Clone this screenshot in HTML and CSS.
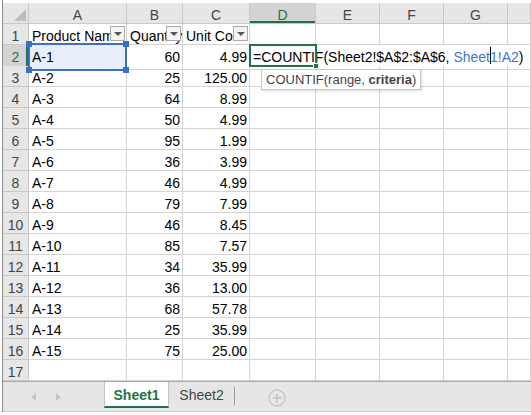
FILE: index.html
```html
<!DOCTYPE html>
<html lang="en">

<head>
    <meta charset="UTF-8">
    <title>Sheet1</title>
    <link rel="stylesheet" href="styles.css">
</head>

<body>
    <div class="sheet">
        <div class="row head">
            <div class="cell corner">
                <svg class="corner-mark" width="12" height="12" viewBox="0 0 12 12"><polygon points="12,0 12,12 0,12" fill="#bdbdbd"/></svg>
            </div>
            <div class="cell">A</div>
            <div class="cell">B</div>
            <div class="cell">C</div>
            <div class="cell on">D</div>
            <div class="cell">E</div>
            <div class="cell">F</div>
            <div class="cell">G</div>
            <div class="cell"></div>
        </div>

        <div class="row">
            <div class="cell rh">1</div>
            <div class="cell">Product Name<span class="filter"></span></div>
            <div class="cell">Quantity<span class="filter"></span></div>
            <div class="cell">Unit Cost<span class="filter"></span></div>
            <div class="cell"></div>
            <div class="cell"></div>
            <div class="cell"></div>
            <div class="cell"></div>
            <div class="cell"></div>
        </div>

        <div class="row">
            <div class="cell rh on">2</div>
            <div class="cell ref">A-1<span class="ref-frame"><i class="h1"></i><i class="h2"></i><i class="h3"></i><i class="h4"></i></span></div>
            <div class="cell num">60</div>
            <div class="cell num">4.99</div>
            <div class="cell edit spill">=COUNTIF(Sheet2!$A$2:$A$6, <span class="blue">Sheet<span class="caret"></span>1!A2</span>)
                <span class="edit-frame"><i class="handle"></i></span>
                <div class="tip">COUNTIF(range, <b>criteria</b>)</div>
            </div>
            <div class="cell spill"></div>
            <div class="cell spill"></div>
            <div class="cell spill"></div>
            <div class="cell"></div>
        </div>

        <div class="row"><div class="cell rh">3</div><div class="cell">A-2</div><div class="cell num">25</div><div class="cell num">125.00</div><div class="cell"></div><div class="cell"></div><div class="cell"></div><div class="cell"></div><div class="cell"></div></div>
        <div class="row"><div class="cell rh">4</div><div class="cell">A-3</div><div class="cell num">64</div><div class="cell num">8.99</div><div class="cell"></div><div class="cell"></div><div class="cell"></div><div class="cell"></div><div class="cell"></div></div>
        <div class="row"><div class="cell rh">5</div><div class="cell">A-4</div><div class="cell num">50</div><div class="cell num">4.99</div><div class="cell"></div><div class="cell"></div><div class="cell"></div><div class="cell"></div><div class="cell"></div></div>
        <div class="row"><div class="cell rh">6</div><div class="cell">A-5</div><div class="cell num">95</div><div class="cell num">1.99</div><div class="cell"></div><div class="cell"></div><div class="cell"></div><div class="cell"></div><div class="cell"></div></div>
        <div class="row"><div class="cell rh">7</div><div class="cell">A-6</div><div class="cell num">36</div><div class="cell num">3.99</div><div class="cell"></div><div class="cell"></div><div class="cell"></div><div class="cell"></div><div class="cell"></div></div>
        <div class="row"><div class="cell rh">8</div><div class="cell">A-7</div><div class="cell num">46</div><div class="cell num">4.99</div><div class="cell"></div><div class="cell"></div><div class="cell"></div><div class="cell"></div><div class="cell"></div></div>
        <div class="row"><div class="cell rh">9</div><div class="cell">A-8</div><div class="cell num">79</div><div class="cell num">7.99</div><div class="cell"></div><div class="cell"></div><div class="cell"></div><div class="cell"></div><div class="cell"></div></div>
        <div class="row"><div class="cell rh">10</div><div class="cell">A-9</div><div class="cell num">46</div><div class="cell num">8.45</div><div class="cell"></div><div class="cell"></div><div class="cell"></div><div class="cell"></div><div class="cell"></div></div>
        <div class="row"><div class="cell rh">11</div><div class="cell">A-10</div><div class="cell num">85</div><div class="cell num">7.57</div><div class="cell"></div><div class="cell"></div><div class="cell"></div><div class="cell"></div><div class="cell"></div></div>
        <div class="row"><div class="cell rh">12</div><div class="cell">A-11</div><div class="cell num">34</div><div class="cell num">35.99</div><div class="cell"></div><div class="cell"></div><div class="cell"></div><div class="cell"></div><div class="cell"></div></div>
        <div class="row"><div class="cell rh">13</div><div class="cell">A-12</div><div class="cell num">36</div><div class="cell num">13.00</div><div class="cell"></div><div class="cell"></div><div class="cell"></div><div class="cell"></div><div class="cell"></div></div>
        <div class="row"><div class="cell rh">14</div><div class="cell">A-13</div><div class="cell num">68</div><div class="cell num">57.78</div><div class="cell"></div><div class="cell"></div><div class="cell"></div><div class="cell"></div><div class="cell"></div></div>
        <div class="row"><div class="cell rh">15</div><div class="cell">A-14</div><div class="cell num">25</div><div class="cell num">35.99</div><div class="cell"></div><div class="cell"></div><div class="cell"></div><div class="cell"></div><div class="cell"></div></div>
        <div class="row"><div class="cell rh">16</div><div class="cell">A-15</div><div class="cell num">75</div><div class="cell num">25.00</div><div class="cell"></div><div class="cell"></div><div class="cell"></div><div class="cell"></div><div class="cell"></div></div>
        <div class="row"><div class="cell rh">17</div><div class="cell"></div><div class="cell"></div><div class="cell"></div><div class="cell"></div><div class="cell"></div><div class="cell"></div><div class="cell"></div><div class="cell"></div></div>

        <div class="tabs">
            <div class="nav">
                <span class="arrow left"></span>
                <span class="arrow right"></span>
            </div>
            <div class="tab current">Sheet1</div>
            <div class="tab">Sheet2</div>
            <div class="sep"></div>
            <svg class="add" width="18" height="18" viewBox="0 0 18 18">
                <circle cx="9" cy="9" r="8" fill="none" stroke="#c3c3c3" stroke-width="1.3"/>
                <path d="M9 4.5v9M4.5 9h9" stroke="#c3c3c3" stroke-width="1.6"/>
            </svg>
        </div>
    </div>
</body>

</html>
```

FILE: styles.css
```css
* {
    padding: 0;
    margin: 0;
    box-sizing: border-box;
}

body {
    width: 531px;
    height: 415px;
    overflow: hidden;
    background-color: #fff;
    font-family: "Liberation Sans", Arial, sans-serif;
    font-size: 14px;
    color: #000;
}

.sheet {
    margin-left: 2px;
    padding-top: 3px;
    border-left: 1px solid #8a8a8a;
    position: relative;
}

.row {
    display: grid;
    grid-template-columns: 26px 98px 56px 67px 66px 64px 64px 64px 1fr;
    height: 21px;
}

.cell {
    border-right: 1px solid #d4d4d4;
    border-bottom: 1px solid #d4d4d4;
    /*行高大于格子, 让文字往下靠*/
    line-height: 24px;
    padding: 0 3px;
    white-space: nowrap;
    overflow: hidden;
    position: relative;
}

.num {
    text-align: right;
    padding-right: 2px;
}

/* 列头和行头 */
.head .cell,
.rh {
    background-color: #e6e6e6;
    border-right-color: #c8c8c8;
    border-bottom-color: #c8c8c8;
    color: #444;
    text-align: center;
    padding: 0;
}

.head .cell.on {
    background-color: #d3d3d3;
    color: #217346;
    box-shadow: inset 0 -2px 0 #217346;
}

.rh.on {
    background-color: #d3d3d3;
    color: #217346;
    box-shadow: inset -2px 0 0 #217346;
}

.corner-mark {
    position: absolute;
    right: 2px;
    bottom: 2px;
}

/* 筛选按钮 */
.filter {
    position: absolute;
    right: 1px;
    top: 2px;
    width: 15px;
    height: 15px;
    border: 1px solid #ababab;
    background-color: #f3f3f3;
}

.filter::after {
    content: "";
    position: absolute;
    left: 3px;
    top: 5px;
    border-left: 4px solid transparent;
    border-right: 4px solid transparent;
    border-top: 4px solid #555;
}

/* 公式引用的单元格 */
.ref {
    background-color: #e8eff9;
    overflow: visible;
}

.ref-frame {
    position: absolute;
    left: -1px;
    top: -2px;
    right: -1px;
    bottom: -2px;
    border: 2px solid #3b6ec6;
    z-index: 2;
}

.ref-frame i {
    position: absolute;
    width: 6px;
    height: 6px;
    background-color: #3b6ec6;
}

.ref-frame .h1 {
    left: -4px;
    top: -4px;
}

.ref-frame .h2 {
    right: -4px;
    top: -4px;
}

.ref-frame .h3 {
    left: -4px;
    bottom: -4px;
}

.ref-frame .h4 {
    right: -4px;
    bottom: -4px;
}

/* 正在编辑的单元格 */
.edit {
    overflow: visible;
    padding-left: 3px;
}

.spill {
    border-right-color: transparent;
}

.blue {
    color: #3a78d0;
}

.caret {
    display: inline-block;
    width: 0;
    height: 17px;
    border-left: 1px solid #000;
    vertical-align: -2px;
    margin-right: -1px;
}

.edit-frame {
    position: absolute;
    left: -1px;
    top: -1px;
    width: 68px;
    height: 23px;
    border: 2px solid #217346;
    z-index: 2;
}

.handle {
    position: absolute;
    right: -4px;
    bottom: -4px;
    width: 6px;
    height: 6px;
    background-color: #217346;
    border: 1px solid #fff;
}

.tip {
    position: absolute;
    left: 11px;
    top: 24px;
    height: 21px;
    padding: 0 4px;
    border: 1px solid #c6c6c6;
    background-color: #fff;
    box-shadow: 1px 1px 2px rgba(0, 0, 0, 0.15);
    font-size: 13px;
    line-height: 19px;
    color: #444;
    z-index: 5;
}

.tip b {
    color: #444;
}

/* 工作表标签栏 */
.tabs {
    display: flex;
    align-items: stretch;
    height: 31px;
    background-color: #e6e6e6;
    border-top: 1px solid #a9a9a9;
    border-bottom: 1px solid #cfcfcf;
}

.nav {
    width: 101px;
    display: flex;
    align-items: center;
    padding-left: 28px;
    gap: 20px;
}

.arrow {
    width: 0;
    height: 0;
    border-top: 4px solid transparent;
    border-bottom: 4px solid transparent;
}

.arrow.left {
    border-right: 5px solid #c4c4c4;
}

.arrow.right {
    border-left: 5px solid #c4c4c4;
}

.tab {
    width: 65px;
    height: 26px;
    line-height: 26px;
    text-align: center;
    color: #444;
}

.tab.current {
    background-color: #fff;
    border-left: 1px solid #c3c3c3;
    border-right: 1px solid #c3c3c3;
    border-bottom: 2px solid #217346;
    color: #217346;
    font-weight: bold;
}

.sep {
    width: 1px;
    height: 18px;
    margin-top: 5px;
    background-color: #9a9a9a;
}

.add {
    margin-left: 33px;
    margin-top: 7px;
}
```
